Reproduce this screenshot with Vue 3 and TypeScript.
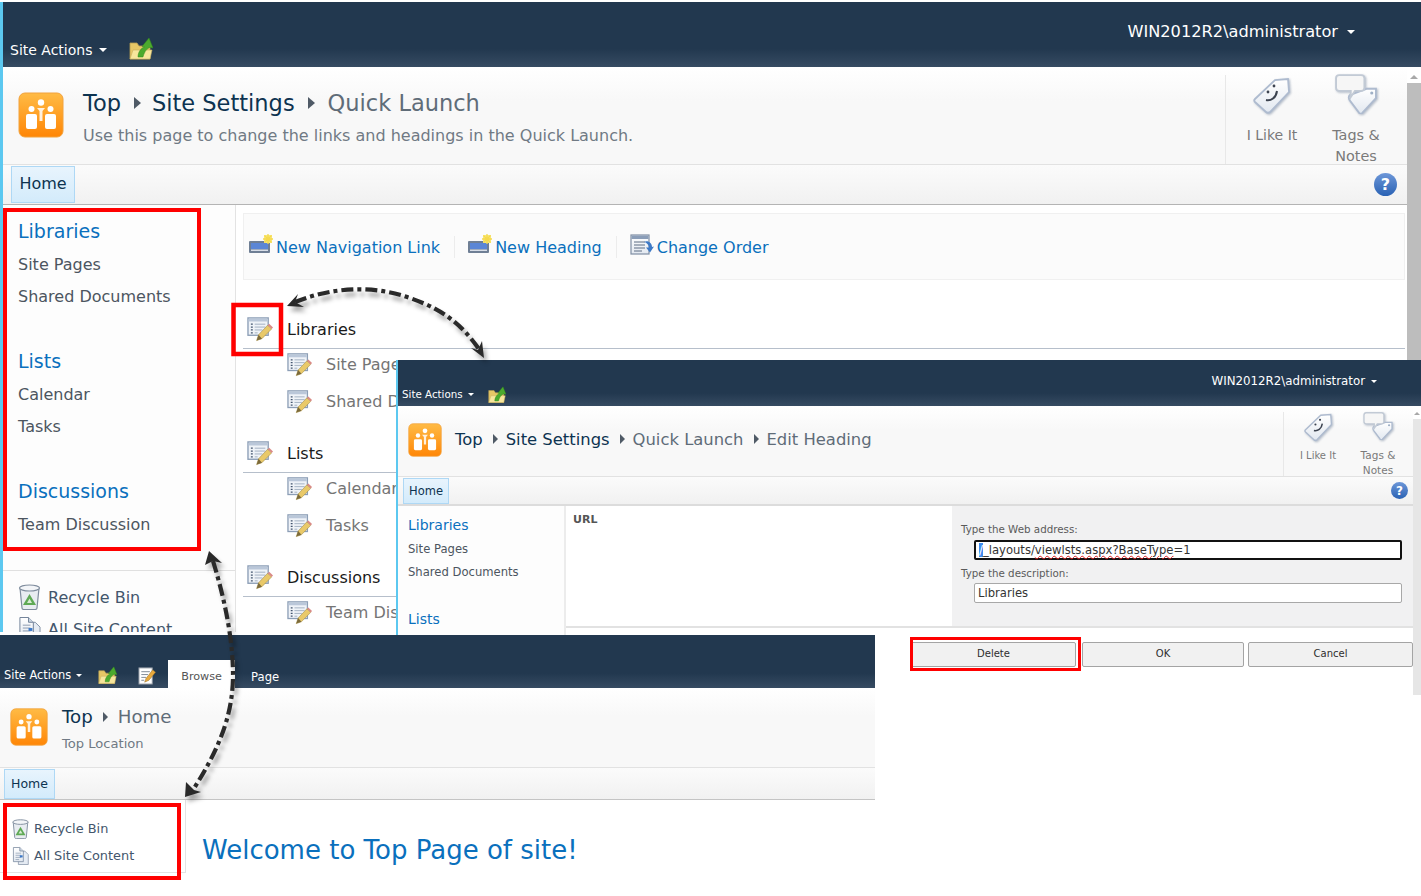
<script setup lang="ts">
interface NavGroup {
  title: string
  items: string[]
}

const groups: NavGroup[] = [
  { title: "Libraries", items: ["Site Pages", "Shared Documents"] },
  { title: "Lists", items: ["Calendar", "Tasks"] },
  { title: "Discussions", items: ["Team Discussion"] }
]

const smallNav = ["Site Pages", "Shared Documents"]
</script>

<template>
  <div class="canvas">
    <svg class="defs" width="0" height="0" aria-hidden="true">
      <defs>
        <linearGradient id="orange" x1="0" y1="0" x2="0" y2="1">
          <stop offset="0" stop-color="#ffbb45" />
          <stop offset="1" stop-color="#ff8606" />
        </linearGradient>
        <linearGradient id="paper" x1="0" y1="0" x2="0" y2="1">
          <stop offset="0" stop-color="#ffffff" />
          <stop offset="1" stop-color="#e2e8f0" />
        </linearGradient>
        <symbol id="site" viewBox="0 0 46 46">
          <rect x="1" y="1" width="44" height="44" rx="6" fill="url(#orange)" stroke="#f2a23c" />
          <rect x="8" y="22" width="11" height="15" rx="2" fill="#fff" />
          <rect x="27" y="22" width="11" height="15" rx="2" fill="#fff" />
          <circle cx="13.500" cy="17" r="3" fill="#fff" />
          <circle cx="32.500" cy="17" r="3" fill="#fff" />
          <circle cx="23" cy="10.500" r="3.200" fill="#fff" />
          <path d="M19 16h8l-2.500 3v10h-3V19z" fill="#fff" opacity=".85" />
        </symbol>
        <symbol id="folder" viewBox="0 0 24 24">
          <path d="M1 6h7l2 3h11v13H1z" fill="#e6c766" stroke="#b49c50" stroke-width=".8" />
          <path d="M1 22l3-9h19l-2 9z" fill="#f7e69c" stroke="#c7b060" stroke-width=".6" />
          <path d="M9 20C9 15 12 11 15.500 10L13 9.500 20 1l4 10-3.500-.500C17 12 15 16 14 20z" fill="#4caa2e" stroke="#338a1b" stroke-width=".5" />
        </symbol>
        <symbol id="edit" viewBox="0 0 28 27">
          <rect x="1" y="2" width="21" height="18" fill="#eff3f8" stroke="#8c9eb6" stroke-width="1.400" />
          <rect x="1.700" y="2.700" width="19.600" height="3" fill="#bac7d9" />
          <path d="M4 8.500h2M4 11.500h2M4 14.500h2M4 17.500h2" stroke="#44566f" stroke-width="1.300" />
          <path d="M8 8.500h11M8 11.500h11M8 14.500h8M8 17.500h3" stroke="#a0aec0" />
          <path d="M10 25.500l2-6 9.500-10 4 4-10 10z" fill="#e9c969" stroke="#a08a45" stroke-width=".6" />
          <path d="M21.500 9.500l1.500-1.500 4 4-1.500 1.500z" fill="#d98a86" />
          <path d="M10 25.500l2-6 3.500 4z" fill="#7b6a3c" />
        </symbol>
        <symbol id="pageedit" viewBox="0 0 20 20">
          <rect x="1" y="2" width="14" height="17" fill="#fff" stroke="#8d95a0" />
          <path d="M3.500 6h9M3.500 9h7M3.500 12h5M3.500 15h3" stroke="#7d8794" />
          <path d="M7 17l1.500-4 7-9 3 2.500-7 8.500z" fill="#e9a93c" stroke="#8d6a2a" stroke-width=".5" />
        </symbol>
        <symbol id="like" viewBox="0 0 38 38">
          <path d="M2 22L22 3l13-1 1 13-19 20c-1 1-3 1-4 0L2 25c-1-1-1-2 0-3z" fill="url(#paper)" stroke="#aebbcf" stroke-width="1.800" />
          <circle cx="15" cy="15" r="1.400" fill="#3c4350" />
          <circle cx="21" cy="9" r="1.400" fill="#3c4350" />
          <path d="M13 23c5 1 10-2 11-9" fill="none" stroke="#3c4350" stroke-width="2" />
        </symbol>
        <symbol id="tags" viewBox="0 0 40 38">
          <path d="M14 20L30 14l9 0 0 9-13 14c-1 1-2 1-3 0L14 25c-1-2-1-4 0-5z" fill="url(#paper)" stroke="#aebbcf" stroke-width="1.800" />
          <circle cx="35" cy="18" r="1.500" fill="#9fb0c6" />
          <path d="M4 1h21c2 0 3 1 3 3v9c0 2-1 3-3 3h-6l-4 6v-6H4c-2 0-3-1-3-3V4c0-2 1-3 3-3z" fill="#f6f6f6" stroke="#c2cad5" stroke-width="1.800" />
        </symbol>
        <symbol id="recycle" viewBox="0 0 22 26">
          <path d="M1.500 4l2 20c0 1 1 1.500 2 1.500h11c1 0 2-.5 2-1.500l2-20z" fill="#e8ecf1" stroke="#7f8c9d" stroke-width="1.200" />
          <ellipse cx="11" cy="4" rx="10" ry="3" fill="#f3f5f8" stroke="#7f8c9d" stroke-width="1.200" />
          <path d="M11 10l6.500 11h-13z" fill="#5fa955" />
          <path d="M11 14.500l2.500 4.500h-5z" fill="#d8ecd4" />
        </symbol>
        <symbol id="content" viewBox="0 0 24 26">
          <path d="M9 6h9l5 5v14H9z" fill="#e5ebf3" stroke="#7f8ea3" />
          <path d="M2 1h9l5 5v15H2z" fill="url(#paper)" stroke="#6f7f96" />
          <path d="M11 1v5h5" fill="#cdd7e4" stroke="#6f7f96" />
          <path d="M5 9h8M5 12h8M5 15h8M5 18h5" stroke="#8a9ab0" />
          <rect x="11" y="12" width="4" height="3" fill="#3b78c9" />
        </symbol>
        <symbol id="newlink" viewBox="0 0 24 20">
          <rect x="0" y="7" width="21" height="12" rx="1" fill="#6f7f95" />
          <rect x="2" y="9" width="17" height="6" fill="#5b86d6" />
          <rect x="2" y="15.500" width="17" height="1.500" fill="#d8dee8" />
          <rect x="15" y="1" width="8" height="8" fill="#f7e77a" />
          <path d="M19 0v10M14 5h10M15.500 1.500l7 7M22.500 1.500l-7 7" stroke="#f5d94c" stroke-width="1.300" />
        </symbol>
        <symbol id="order" viewBox="0 0 24 22">
          <rect x="1" y="1" width="18" height="19" fill="url(#paper)" stroke="#7f8ea3" stroke-width="1.200" />
          <rect x="1.500" y="1.500" width="17" height="3.500" fill="#8a9db8" />
          <path d="M4 8h11M4 11h11M4 14h11M4 17h8" stroke="#5d6d83" />
          <path d="M14 8c4-2 8 1 8 5l2-.5-4 6-4-5 3 0c0-2-2-5-5-5.500z" fill="#3d79c6" />
        </symbol>
      </defs>
    </svg>

    <!-- back window: quick launch settings -->
    <section class="win win-a">
      <header class="bar bar-a">
        <span class="actions">Site Actions<i class="caret"></i></span>
        <svg class="folder"><use href="#folder" /></svg>
        <span class="user">WIN2012R2\administrator<i class="caret"></i></span>
      </header>
      <div class="win-row">
        <div class="page">
          <div class="title-row">
            <svg class="site-logo"><use href="#site" /></svg>
            <div class="title-text">
              <div class="crumbs">
                <span class="crumb-link">Top</span><i class="sep"></i>
                <span class="crumb-link">Site Settings</span><i class="sep"></i>
                <span class="crumb-now">Quick Launch</span>
              </div>
              <p class="desc">Use this page to change the links and headings in the Quick Launch.</p>
            </div>
            <div class="social">
              <div class="social-item like-item">
                <svg class="like-ic"><use href="#like" /></svg>
                <span>I Like It</span>
              </div>
              <div class="social-item tags-item">
                <svg class="tags-ic"><use href="#tags" /></svg>
                <span>Tags &amp; Notes</span>
              </div>
            </div>
          </div>
          <div class="tabs">
            <span class="home-tab">Home</span>
            <span class="help">?</span>
          </div>
          <div class="main">
            <nav class="nav">
              <div v-for="g in groups" :key="g.title" class="nav-group">
                <div class="nav-head">{{ g.title }}</div>
                <div v-for="item in g.items" :key="item" class="nav-item">{{ item }}</div>
              </div>
              <div class="nav-extra">
                <div class="extra-row"><svg class="extra-ic"><use href="#recycle" /></svg>Recycle Bin</div>
                <div class="extra-row"><svg class="extra-ic"><use href="#content" /></svg>All Site Content</div>
              </div>
            </nav>
            <div class="content">
              <div class="toolbar">
                <span class="tool"><svg class="tool-ic"><use href="#newlink" /></svg>New Navigation Link</span>
                <i class="tool-sep"></i>
                <span class="tool"><svg class="tool-ic"><use href="#newlink" /></svg>New Heading</span>
                <i class="tool-sep"></i>
                <span class="tool"><svg class="tool-ic order-ic"><use href="#order" /></svg>Change Order</span>
              </div>
              <div class="links">
                <div v-for="h in groups" :key="h.title" class="link-group">
                  <div class="link-head"><svg class="edit-ic"><use href="#edit" /></svg>{{ h.title }}</div>
                  <div class="link-items">
                    <div v-for="item in h.items" :key="item" class="link-item">
                      <svg class="edit-ic"><use href="#edit" /></svg>{{ item }}
                    </div>
                  </div>
                </div>
              </div>
            </div>
          </div>
        </div>
        <div class="scroll scroll-a"><i class="scroll-up"></i><i class="thumb"></i></div>
      </div>
    </section>

    <!-- middle window: edit heading -->
    <section class="win win-b">
      <header class="bar bar-b">
        <span class="actions">Site Actions<i class="caret"></i></span>
        <svg class="folder"><use href="#folder" /></svg>
        <span class="user">WIN2012R2\administrator<i class="caret"></i></span>
      </header>
      <div class="win-row">
        <div class="page">
          <div class="title-row">
            <svg class="site-logo"><use href="#site" /></svg>
            <div class="crumbs">
              <span class="crumb-link">Top</span><i class="sep"></i>
              <span class="crumb-link">Site Settings</span><i class="sep"></i>
              <span class="crumb-now">Quick Launch</span><i class="sep"></i>
              <span class="crumb-now">Edit Heading</span>
            </div>
            <div class="social">
              <div class="social-item like-item">
                <svg class="like-ic"><use href="#like" /></svg>
                <span>I Like It</span>
              </div>
              <div class="social-item tags-item">
                <svg class="tags-ic"><use href="#tags" /></svg>
                <span>Tags &amp; Notes</span>
              </div>
            </div>
          </div>
          <div class="tabs">
            <span class="home-tab">Home</span>
            <span class="help">?</span>
          </div>
          <div class="main">
            <nav class="nav">
              <div class="nav-head">Libraries</div>
              <div v-for="item in smallNav" :key="item" class="nav-item">{{ item }}</div>
              <div class="nav-head lists-head">Lists</div>
            </nav>
            <div class="form-col">
              <div class="form-top">
                <div class="url-side">URL</div>
                <div class="panel">
                  <div class="field-label">Type the Web address:</div>
                  <div class="field focus"><span class="selected">/</span>_layouts/<span class="squiggle">viewlsts.aspx?BaseType</span>=1</div>
                  <div class="field-label second">Type the description:</div>
                  <div class="field">Libraries</div>
                </div>
              </div>
              <div class="buttons">
                <button class="btn">Delete</button>
                <button class="btn btn-ok">OK</button>
                <button class="btn">Cancel</button>
              </div>
            </div>
          </div>
        </div>
        <div class="scroll scroll-b"><i class="scroll-up"></i><i class="thumb"></i></div>
      </div>
    </section>

    <!-- front window: home page -->
    <section class="win win-c">
      <header class="bar bar-c">
        <span class="actions">Site Actions<i class="caret"></i></span>
        <svg class="folder"><use href="#folder" /></svg>
        <svg class="folder page-edit"><use href="#pageedit" /></svg>
        <span class="browse">Browse</span>
        <span class="page-tab">Page</span>
      </header>
      <div class="title-row">
        <svg class="site-logo"><use href="#site" /></svg>
        <div class="title-text">
          <div class="crumbs">
            <span class="crumb-link">Top</span><i class="sep"></i>
            <span class="crumb-now">Home</span>
          </div>
          <p class="desc">Top Location</p>
        </div>
      </div>
      <div class="tabs">
        <span class="home-tab">Home</span>
      </div>
      <div class="main">
        <nav class="nav">
          <div class="extra-row"><svg class="extra-ic"><use href="#recycle" /></svg>Recycle Bin</div>
          <div class="extra-row"><svg class="extra-ic"><use href="#content" /></svg>All Site Content</div>
        </nav>
        <h1 class="welcome">Welcome to Top Page of site!</h1>
      </div>
    </section>

    <!-- annotations drawn over the three windows -->
    <svg class="notes" viewBox="0 0 1421 896">
      <g class="arrows">
        <path d="M295 302C330 288 370 284 410 298S465 330 479 349" fill="none" stroke="#2a2a2a" stroke-width="4.200" stroke-dasharray="12 4 4 4" />
        <path d="M287 306L298 294L295 302L304 307Z" fill="#2a2a2a" />
        <path d="M484 358L471 348L478 350L482 341Z" fill="#2a2a2a" />
        <path d="M213 561C225 600 233 640 233 675C233 720 215 755 193 790" fill="none" stroke="#2a2a2a" stroke-width="4.200" stroke-dasharray="12 4 4 4" />
        <path d="M209 551L205 565L213 561L222 563Z" fill="#2a2a2a" />
        <path d="M185 797L186 782L194 790L201 792Z" fill="#2a2a2a" />
      </g>
      <g fill="none" stroke="#f00">
        <rect x="5" y="210" width="194" height="339" stroke-width="4" />
        <rect x="233.500" y="305" width="47.500" height="49" stroke-width="4.500" />
        <rect x="911.500" y="638.500" width="168" height="31" stroke-width="3" />
        <rect x="5" y="805" width="174" height="73" stroke-width="4" />
      </g>
    </svg>
  </div>
</template>

<style>
html,
body {
  margin: 0;
  background: #fff;
}
</style>

<style scoped>
* {
  box-sizing: border-box;
}
.canvas {
  position: relative;
  width: 1421px;
  height: 896px;
  overflow: hidden;
  background: #fff;
  font-family: "DejaVu Sans", Verdana, sans-serif;
  color: #444;
}
.defs {
  position: absolute;
}
.win {
  position: absolute;
  display: flex;
  flex-direction: column;
  background: #fff;
  overflow: hidden;
}
.win-row {
  display: flex;
  flex: 1;
  min-height: 0;
}
.page {
  flex: 1;
  min-width: 0;
  display: flex;
  flex-direction: column;
}
.bar {
  display: flex;
  align-items: flex-start;
  flex: none;
  background: linear-gradient(#22384f 0%, #22384f 72%, #364b62 100%);
  color: #fff;
}
.actions,
.user {
  display: flex;
  align-items: center;
  white-space: nowrap;
}
.caret {
  display: inline-block;
  width: 0;
  height: 0;
  border: 4px solid transparent;
  border-top-color: #fff;
  border-bottom: 0;
}
.user {
  margin-left: auto;
}
.title-row {
  display: flex;
  flex: none;
  background: linear-gradient(#fff, #f8f8f8 35%);
  border-bottom: 1px solid #e2e2e2;
}
.title-text {
  display: flex;
  flex-direction: column;
}
.crumbs {
  display: flex;
  align-items: center;
  white-space: nowrap;
}
.crumb-link {
  color: #0d3350;
}
.crumb-now {
  color: #5f6c78;
}
.sep {
  display: inline-block;
  width: 0;
  height: 0;
  border: 6px solid transparent;
  border-left: 7px solid #4f5a66;
  border-right: 0;
}
.desc {
  margin: 0;
  color: #707a84;
  white-space: nowrap;
}
.social {
  display: flex;
  margin-left: auto;
  border-left: 1px solid #e8e8e8;
  color: #7a7a7a;
}
.social-item {
  display: flex;
  flex-direction: column;
  align-items: center;
  text-align: center;
}
.like-ic,
.tags-ic {
  flex: none;
  filter: drop-shadow(1px 1px 1px rgba(90, 110, 140, 0.45));
}
.tabs {
  display: flex;
  flex: none;
  align-items: flex-start;
  background: linear-gradient(#fbfbfb, #f1f1f1);
  border-bottom: 1px solid #b4b4b4;
}
.home-tab {
  display: flex;
  align-items: center;
  justify-content: center;
  background: linear-gradient(#e8f4fd, #d3ebfb);
  border: 1px solid #aed8f5;
  color: #0d3350;
}
.help {
  display: flex;
  align-items: center;
  justify-content: center;
  margin-left: auto;
  border-radius: 50%;
  background: linear-gradient(#6d97d8, #2a62b4);
  color: #fff;
  font-weight: 700;
}
.main {
  display: flex;
  flex: 1;
  min-height: 0;
}
.nav {
  flex: none;
  background: #fdfdfd;
  border-right: 1px solid #e3e3e3;
}
.nav-head {
  color: #0a70bd;
}
.nav-item {
  color: #4c5560;
  white-space: nowrap;
}
.scroll {
  display: flex;
  flex-direction: column;
  flex: none;
  background: #f4f4f4;
}
.scroll-up {
  width: 0;
  height: 0;
  align-self: center;
  border: 4px solid transparent;
  border-bottom-color: #a8a8a8;
  border-top: 0;
}
.thumb {
  flex: 1;
}

/* back window */
.win-a {
  left: 0;
  top: 2px;
  width: 1421px;
  height: 630px;
  border-left: 3px solid #5cc8f0;
}
.bar-a {
  height: 65px;
}
.bar-a .actions {
  margin: 37px 0 0 7px;
  font-size: 14px;
  line-height: 22px;
}
.bar-a .caret {
  margin-left: 7px;
}
.bar-a .folder {
  width: 24px;
  height: 24px;
  margin: 35px 0 0 22px;
}
.bar-a .user {
  margin-top: 20px;
  padding-right: 66px;
  font-size: 16.2px;
  line-height: 20px;
}
.bar-a .user .caret {
  margin-left: 9px;
}
.win-a .title-row {
  height: 98px;
}
.win-a .site-logo {
  width: 46px;
  height: 46px;
  margin: 25px 0 0 15px;
}
.win-a .title-text {
  margin: 22px 0 0 19px;
}
.win-a .crumbs {
  height: 28px;
  font-size: 22.5px;
}
.win-a .sep {
  margin: 0 11px 0 13px;
}
.win-a .crumb-now {
  margin-left: 2px;
}
.win-a .desc {
  margin-top: 8px;
  font-size: 16px;
  line-height: 22px;
}
.win-a .social {
  width: 180px;
  margin: 8px 2px 0 auto;
  font-size: 14px;
  line-height: 21px;
}
.win-a .like-item {
  width: 92px;
}
.win-a .tags-item {
  width: 76px;
  font-size: 14.4px;
}
.win-a .like-ic {
  width: 38px;
  height: 38px;
  margin-top: 2px;
  margin-bottom: 10px;
}
.win-a .tags-ic {
  width: 42px;
  height: 40px;
  margin-top: -1px;
  margin-bottom: 11px;
}
.win-a .tabs {
  height: 40px;
}
.win-a .home-tab {
  width: 64px;
  height: 37px;
  margin: 1px 0 0 8px;
  padding-bottom: 2px;
  font-size: 16px;
}
.win-a .help {
  width: 23px;
  height: 23px;
  margin: 8px 10px 0 auto;
  font-size: 16px;
}
.win-a .nav {
  width: 233px;
  padding-top: 13px;
}
.win-a .nav-group {
  padding-left: 15px;
  margin-bottom: 35px;
}
.win-a .nav-head {
  height: 26px;
  margin-bottom: 5px;
  font-size: 19px;
  line-height: 26px;
}
.win-a .nav-item {
  height: 32px;
  font-size: 16px;
  line-height: 32px;
}
.nav-extra {
  margin-top: -6px;
  padding: 10px 0 0 15px;
  border-top: 1px solid #e0e0e0;
}
.extra-row {
  display: flex;
  align-items: center;
  color: #43566c;
  white-space: nowrap;
}
.win-a .extra-row {
  height: 32px;
  font-size: 16px;
}
.win-a .extra-ic {
  width: 23px;
  height: 26px;
  margin-right: 7px;
}
.content {
  flex: 1;
  min-width: 0;
  padding: 8px 2px 0 7px;
}
.toolbar {
  display: flex;
  align-items: center;
  height: 67px;
  padding: 1px 0 0 5px;
  background: #fbfbfb;
  border: 1px solid #f0f0f0;
}
.tool {
  display: flex;
  align-items: center;
  color: #0a70bd;
  font-size: 16px;
  white-space: nowrap;
}
.tool-ic {
  width: 24px;
  height: 20px;
  margin: -6px 3px 0 0;
}
.order-ic {
  height: 22px;
  margin-top: -4px;
}
.tool-sep {
  width: 1px;
  height: 22px;
  margin: 0 13px 0 14px;
  background: #ececec;
}
.links {
  padding-top: 30px;
}
.link-group {
  margin-bottom: 14px;
}
.link-head {
  display: flex;
  align-items: center;
  height: 39px;
  padding-left: 4px;
  border-bottom: 1px solid #b6bfcb;
  color: #1a1a1a;
  font-size: 16px;
}
.link-items {
  margin-top: -3px;
}
.link-item {
  display: flex;
  align-items: center;
  height: 37px;
  padding-left: 44px;
  color: #757575;
  font-size: 16px;
  white-space: nowrap;
}
.edit-ic {
  flex: none;
  width: 27px;
  height: 26px;
  margin-right: 13px;
}
.link-item .edit-ic {
  width: 26px;
  height: 25px;
}
.scroll-a {
  width: 14px;
  padding-top: 8px;
  background: #fff;
}
.scroll-a .thumb {
  margin-top: 4px;
  background: #bdbdbd;
}

/* middle window */
.win-b {
  left: 396px;
  top: 360px;
  width: 1025px;
  height: 335px;
  border-left: 2px solid #5cc8f0;
}
.bar-b {
  height: 46px;
}
.bar-b .actions {
  margin: 26px 0 0 4px;
  font-size: 10.3px;
  line-height: 16px;
}
.bar-b .caret {
  margin-left: 5px;
  border-width: 3px;
  border-bottom: 0;
}
.bar-b .folder {
  width: 18px;
  height: 18px;
  margin: 26px 0 0 14px;
}
.bar-b .user {
  margin-top: 13px;
  padding-right: 44px;
  font-size: 11.8px;
  line-height: 16px;
}
.bar-b .user .caret {
  margin-left: 6px;
}
.win-b .title-row {
  height: 71px;
}
.win-b .site-logo {
  width: 34px;
  height: 34px;
  margin: 17px 0 0 10px;
}
.win-b .crumbs {
  height: 20px;
  margin: 23px 0 0 13px;
  font-size: 16.4px;
}
.win-b .sep {
  margin: 0 8px 0 10px;
  border-width: 5px;
  border-right: 0;
}
.win-b .social {
  margin: 6px 0 0 auto;
  font-size: 10px;
  line-height: 15px;
}
.win-b .like-item {
  width: 68px;
}
.win-b .tags-item {
  width: 52px;
  margin-right: 9px;
  font-size: 10.5px;
}
.win-b .like-ic {
  width: 29px;
  height: 29px;
  margin: 1px 0 6px;
}
.win-b .tags-ic {
  width: 30px;
  height: 28px;
  margin: 0 0 8px;
}
.win-b .tabs {
  height: 29px;
  border-bottom: 2px solid #dcdcdc;
}
.win-b .home-tab {
  width: 46px;
  height: 26px;
  margin: 1px 0 0 5px;
  font-size: 11.5px;
}
.win-b .help {
  width: 17px;
  height: 17px;
  margin: 5px 5px 0 auto;
  font-size: 12px;
}
.win-b .nav {
  width: 168px;
  padding: 10px 0 0 10px;
  border-right: 2px solid #ececec;
}
.win-b .nav-head {
  height: 18px;
  margin-bottom: 4px;
  font-size: 14px;
  line-height: 18px;
}
.win-b .nav-item {
  height: 23px;
  font-size: 11.6px;
  line-height: 23px;
}
.win-b .lists-head {
  margin-top: 26px;
}
.form-col {
  flex: 1;
  min-width: 0;
  display: flex;
  flex-direction: column;
}
.form-top {
  display: flex;
  height: 122px;
  border-bottom: 2px solid #e2e2e2;
}
.url-side {
  flex: 1;
  padding: 7px 0 0 7px;
  color: #555;
  font-size: 11px;
  font-weight: 700;
  line-height: 14px;
}
.panel {
  width: 461px;
  padding: 16px 0 0 9px;
  background: #f1f1f2;
}
.field-label {
  height: 14px;
  margin-bottom: 4px;
  color: #5a5a5a;
  font-size: 10.3px;
  line-height: 14px;
}
.field-label.second {
  margin: 6px 0 3px;
}
.field {
  width: 428px;
  height: 20px;
  margin-left: 13px;
  padding-left: 3px;
  background: #fff;
  border: 1px solid #a8a8a8;
  border-radius: 2px;
  color: #333;
  font-size: 11.6px;
  line-height: 18px;
  white-space: nowrap;
}
.field.focus {
  border: 2px solid #111;
  line-height: 16px;
}
.selected {
  background: #3c8cf0;
  color: #fff;
}
.squiggle {
  text-decoration: underline wavy #e02020 1px;
}
.buttons {
  display: flex;
  justify-content: flex-end;
  gap: 4px;
  margin-top: 14px;
}
.btn {
  width: 165px;
  height: 25px;
  padding: 0 0 3px;
  background: #f1f1f1;
  border: 1px solid #a4a4a4;
  border-radius: 2px;
  color: #2e2e2e;
  font-family: inherit;
  font-size: 10px;
}
.btn-ok {
  width: 162px;
  margin-left: 2px;
}
.scroll-b {
  width: 8px;
  padding-top: 6px;
  background: #fff;
}
.scroll-b .scroll-up {
  border-width: 3px;
  border-top: 0;
}
.scroll-b .thumb {
  margin-top: 4px;
  background: #e6e6e6;
}

/* front window */
.win-c {
  left: 0;
  top: 635px;
  width: 875px;
  height: 245px;
}
.bar-c {
  height: 53px;
}
.bar-c .actions {
  margin: 31px 0 0 4px;
  font-size: 11.4px;
  line-height: 18px;
}
.bar-c .caret {
  margin-left: 5px;
  border-width: 3.5px;
  border-bottom: 0;
}
.bar-c .folder {
  width: 19px;
  height: 19px;
  margin: 31px 0 0 16px;
}
.bar-c .page-edit {
  margin-left: 21px;
}
.browse {
  width: 67px;
  height: 28px;
  margin: 25px 0 0 11px;
  background: #fff;
  color: #555;
  font-size: 11.2px;
  line-height: 34px;
  text-align: center;
}
.page-tab {
  margin: 33px 0 0 16px;
  font-size: 11.6px;
  line-height: 18px;
}
.win-c .title-row {
  height: 80px;
}
.win-c .site-logo {
  width: 38px;
  height: 38px;
  margin: 20px 0 0 10px;
}
.win-c .title-text {
  margin: 15px 0 0 14px;
}
.win-c .crumbs {
  height: 26px;
  font-size: 18.2px;
}
.win-c .sep {
  margin: 2px 10px 0 10px;
  border-width: 5px;
  border-right: 0;
}
.win-c .desc {
  margin-top: 6px;
  font-size: 13.1px;
  line-height: 18px;
}
.win-c .tabs {
  height: 32px;
  border-bottom-color: #c4c4c4;
}
.win-c .home-tab {
  width: 51px;
  height: 30px;
  margin: 1px 0 0 4px;
  padding-bottom: 2px;
  font-size: 12.5px;
}
.win-c .nav {
  width: 186px;
  height: 73px;
  padding: 15px 0 0 12px;
  background: #fff;
  border-bottom: 1px solid #e3e3e3;
}
.win-c .extra-row {
  height: 27px;
  font-size: 12.9px;
}
.win-c .extra-ic {
  width: 17px;
  height: 20px;
  margin-right: 5px;
}
.welcome {
  margin: 33px 0 0 16px;
  color: #0a70bd;
  font-size: 26px;
  font-weight: 400;
  line-height: 34px;
  white-space: nowrap;
}

.notes {
  position: absolute;
  left: 0;
  top: 0;
  width: 1421px;
  height: 896px;
  pointer-events: none;
}
.arrows {
  filter: drop-shadow(3px 5px 2px rgba(0, 0, 0, 0.32));
}
</style>
